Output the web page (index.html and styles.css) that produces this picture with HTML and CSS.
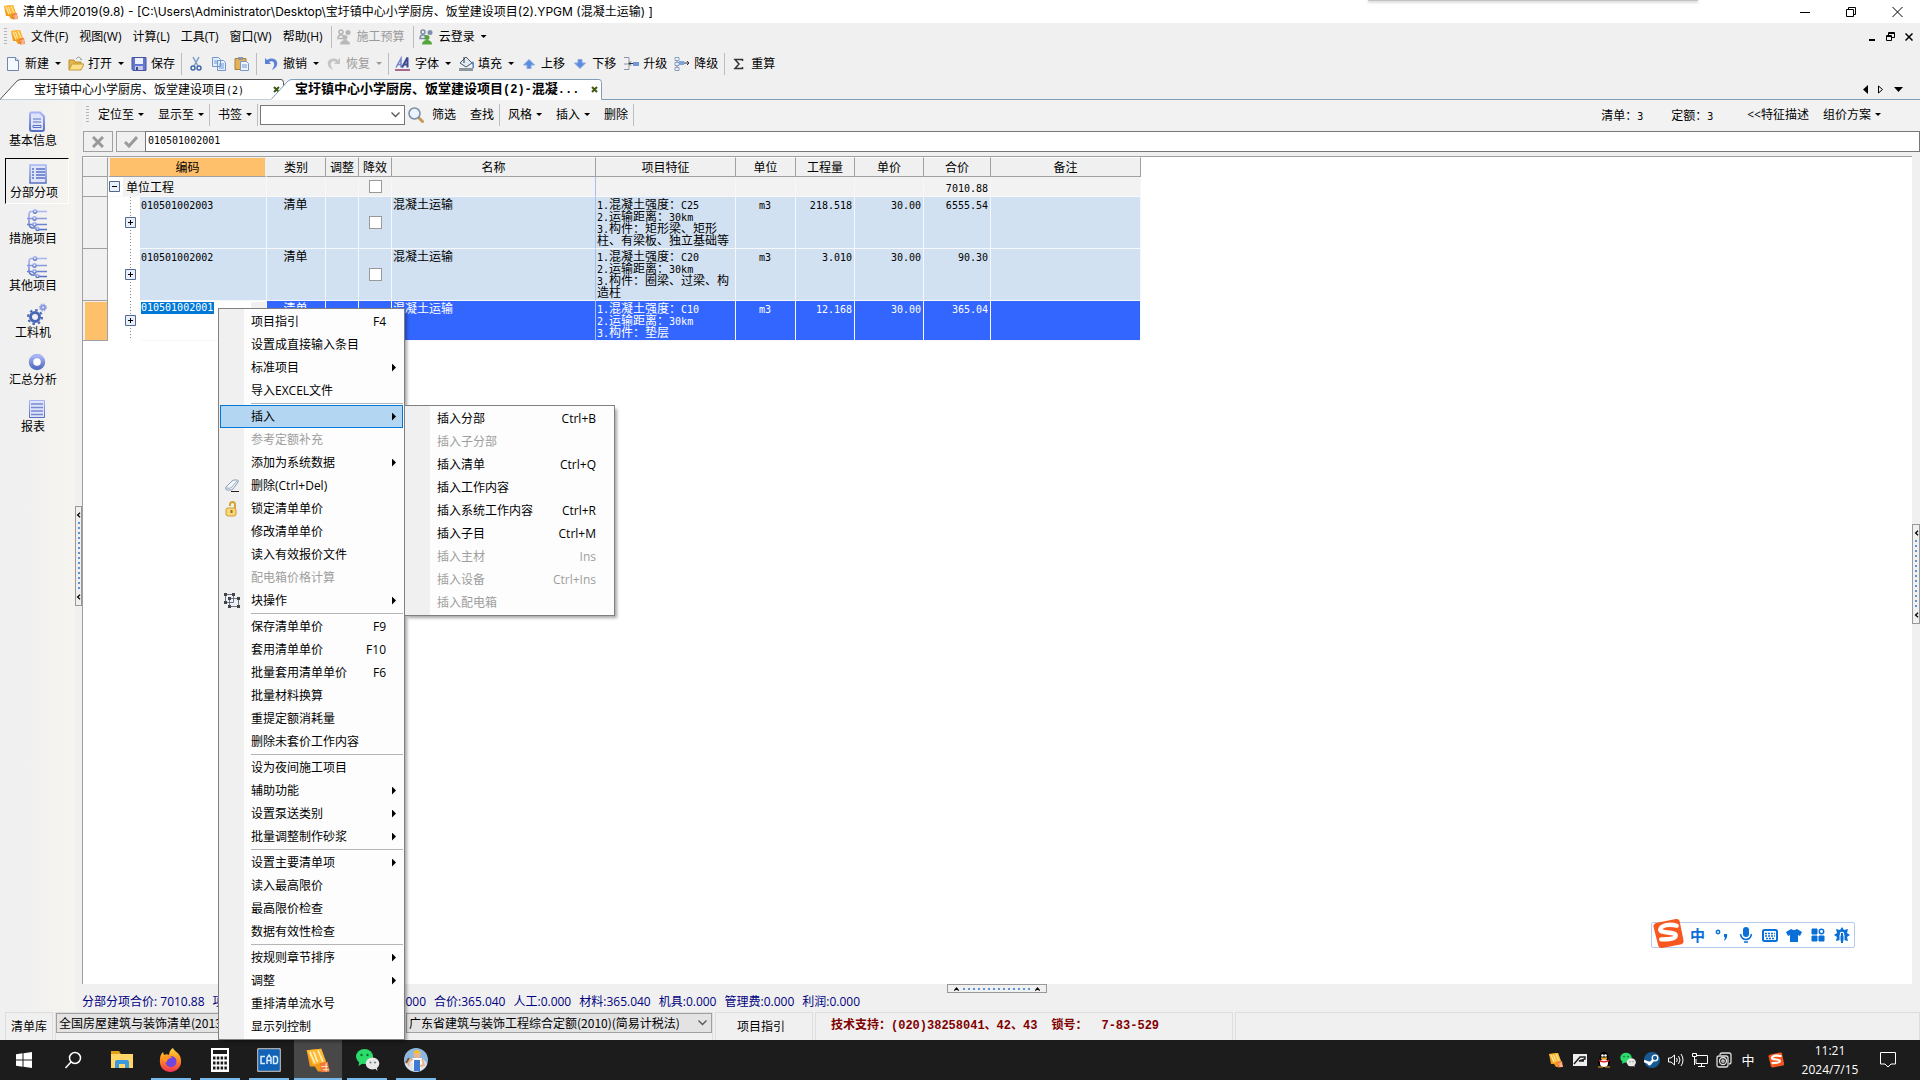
FILE: index.html
```
<!DOCTYPE html>
<html lang="zh-CN">
<head>
<meta charset="utf-8">
<title>清单大师2019(9.8)</title>
<link rel="stylesheet" href="styles.css">
</head>
<body>
<svg width="0" height="0" class="defs" aria-hidden="true">
  <defs>
    <linearGradient id="gb" x1="0" y1="0" x2="0" y2="1"><stop offset="0" stop-color="#a9b4f5"/><stop offset="1" stop-color="#5570c0"/></linearGradient>
    <linearGradient id="gf" x1="0" y1="0" x2="0" y2="1"><stop offset="0" stop-color="#ffd83a"/><stop offset=".5" stop-color="#ff8a1e"/><stop offset="1" stop-color="#f0325a"/></linearGradient>
    <symbol id="app" viewBox="0 0 16 16"><path d="M1 2 10 1l3 9 2 5-7 0-2-3-3 0z" fill="#f09a1c"/><path d="M1 2 10 1l3 8-8 2z" fill="#ffb833"/><path d="M3 3l3 7M5 3c2 1 1 5 3 6M8 2l3 7" stroke="#fff0c0" fill="none"/><path d="M9 10l5-1 1 6-5 .5z" fill="#f07a3c"/><path d="M10 12h4m-3 2h4m-2-4v5" stroke="#ffe0c0" stroke-width=".7"/></symbol>
    <symbol id="wechat" viewBox="0 0 24 24"><ellipse cx="9" cy="8.500" rx="8.500" ry="7.500" fill="#2cdc6b"/><path d="M4 13l-1 5 5-3z" fill="#2cdc6b"/><circle cx="6" cy="7" r="1.200" fill="#116b35"/><circle cx="12" cy="7" r="1.200" fill="#116b35"/><ellipse cx="17" cy="15.500" rx="6.800" ry="6" fill="#e8e8e8"/><path d="M19 20l3 3-1-5z" fill="#e8e8e8"/><circle cx="15" cy="14.500" r="1" fill="#777"/><circle cx="19.500" cy="14.500" r="1" fill="#777"/></symbol>
    <symbol id="sogou" viewBox="0 0 32 32"><path d="M5 5 24 1q3-.5 4 2l4 20q.5 3-2 4L10 31q-3 .5-4-2L1 9q-.5-3 4-4z" fill="#f8581f"/><path d="M25 8c-7-2-16-1-17 4 0 4 16 2 16 6 0 4-9 4-15 4" fill="none" stroke="#fff" stroke-width="4.500" stroke-linecap="round"/></symbol>
    <symbol id="people" viewBox="0 0 16 16"><circle cx="4" cy="3" r="2" fill="none" stroke="currentColor" stroke-width="1.500"/><path d="M1 9.500q0-3.500 3-3.500t3 3.500z" fill="none" stroke="currentColor" stroke-width="1.500"/><circle cx="11" cy="3.500" r="2.500" fill="currentColor"/><circle cx="8" cy="8.500" r="2.500"/><path d="M3 15.500c0-6 10-6 10 0z"/></symbol>
    <symbol id="tree" viewBox="0 0 20 22"><g fill="none" stroke="url(#gb)" stroke-width="1.500"><path d="M20 2.500H9M7 2.500H4Q2 2.500 2 6v9q0 3 3 4h4M0 9.500h6M9 9.500h11M0 15.500h6M9 15.500h11M12 20.500h8"/><circle cx="8" cy="2.500" r="1.700"/><circle cx="7.500" cy="9.500" r="1.700"/><circle cx="7.500" cy="15.500" r="1.700"/><circle cx="10.500" cy="20" r="1.500"/></g></symbol>
    <symbol id="arrow" viewBox="0 0 16 16"><path d="M8 3.500 13.500 9H10v3.500H6V9H2.500z" fill="#5b8ce0" stroke="#89a8dc"/></symbol>
    <symbol id="undo" viewBox="0 0 16 16"><path d="M2 2v6h6L6 6c3-2 6 0 5 4l-2 4c4-2 6-5 5-8S9 1 4 4z" fill="currentColor"/></symbol>
    <symbol id="lvl" viewBox="0 0 16 16"><path d="M3 2v12M3 8h4" stroke="#777" fill="none"/><path d="M1 1.500h4v3H1zM1 6.500h4v3H1zM1 11.500h4v3H1z" fill="#e9f1fb" stroke="#8aa0bd"/><path d="M5 5h5v4H5z" fill="#7ea6dc"/><path d="M10 7h5m-2-2 2 2-2 2" stroke="#333" fill="none"/></symbol>
    <symbol id="lvlup" viewBox="0 0 16 16"><path d="M1 1.500h5v12H1M1 8h5" stroke="#8a94a5" fill="none"/><path d="M6 7.500h6m-4-2-2 2 2 2" stroke="#333" fill="none"/><path d="M10 6h6v4h-6z" fill="#6c98da"/></symbol>
    <symbol id="chev" viewBox="0 0 8 9"><path d="M6.500 1 2.500 4.500l4 3.500" fill="none" stroke="#000" stroke-width="2"/></symbol>
  </defs>
</svg>

<header class="titlebar">
  <svg class="i16"><use href="#app"/></svg>
  <span class="title">清单大师2019(9.8) - [C:\Users\Administrator\Desktop\宝圩镇中心小学厨房、饭堂建设项目(2).YPGM (混凝土运输) ]</span>
  <div class="winbtns">
    <button aria-label="最小化"><svg width="10" height="10"><path d="M0 5.500h10" stroke="#000"/></svg></button>
    <button aria-label="还原"><svg width="10" height="10"><path d="M.5 2.500h7v7h-7zM2.500 2V.5h7v7H8" fill="none" stroke="#000"/></svg></button>
    <button aria-label="关闭"><svg width="11" height="10"><path d="M.5 0l10 10M10.500 0l-10 10" stroke="#000"/></svg></button>
  </div>
  <div class="topstrip"></div>
</header>

<nav class="menubar">
  <i class="grip"></i>
  <svg class="i16"><use href="#app"/></svg>
  <button>文件(F)</button><button>视图(W)</button><button>计算(L)</button><button>工具(T)</button><button>窗口(W)</button><button>帮助(H)</button>
  <i class="sep"></i>
  <button class="tb off"><svg class="i16 gray"><use href="#people"/></svg>施工预算</button>
  <i class="sep"></i>
  <button class="tb"><svg class="i16 green"><use href="#people"/></svg>云登录<i class="caret"></i></button>
  <div class="mdi">
    <button aria-label="最小化子窗口"><svg width="8" height="9"><path d="M1 8h6" stroke="#000" stroke-width="2"/></svg></button>
    <button aria-label="还原子窗口"><svg width="9" height="9"><path d="M.5 3.500h5v5h-5zM.5 4.500h5M2.500 3V.5h6v5H6M2.500 1.500h6" fill="none" stroke="#000"/></svg></button>
    <button aria-label="关闭子窗口"><svg width="8" height="8"><path d="M.5.5l7 7m0-7-7 7" stroke="#000" stroke-width="1.500"/></svg></button>
  </div>
</nav>

<div class="toolbar">
  <button class="tb"><svg class="i16" viewBox="0 0 16 16"><path d="M2.500 1.500h8l3 3v10h-11z" fill="#f4f8ff" stroke="#6f86ad"/><path d="M10.500 1.500v3h3" fill="#cfe0fa" stroke="#6f86ad"/></svg>新建<i class="caret"></i></button>
  <button class="tb"><svg class="i16" viewBox="0 0 16 16"><path d="M1 14V4h5l1 2h6v3" fill="#e8b64a" stroke="#b98f30"/><path d="M1 14l3-6h12l-3 6z" fill="#fbe08c" stroke="#c59a38"/><path d="M8 3c2-3 5-2 5 1l1-1" stroke="#8a94a0" fill="none"/></svg>打开<i class="caret"></i></button>
  <button class="tb"><svg class="i16" viewBox="0 0 16 16"><path d="M1 1.500h14v13H2l-1-1z" fill="#6576cf" stroke="#46539c"/><path d="M4 2h8v6H4z" fill="#eef2ff"/><path d="M4 10h8v4H4z" fill="#c8cbe8"/><path d="M5 11h2v3H5z" fill="#3c478c"/></svg>保存</button>
  <i class="sep"></i>
  <button class="tb" aria-label="剪切"><svg class="i16" viewBox="0 0 16 16"><path d="M5 1l5 9M11 1 6 10" stroke="#7d9cc9" stroke-width="1.500"/><g fill="none" stroke="#4169a8" stroke-width="1.500"><circle cx="5" cy="12" r="2"/><circle cx="11" cy="12" r="2"/></g></svg></button>
  <button class="tb" aria-label="复制"><svg class="i16" viewBox="0 0 16 16"><path d="M1.500 1.500h6l2 2v7h-8zM6.500 4.500h6l2 2v8h-8z" fill="#e4effd" stroke="#7595c7"/><path d="M3 5h3M3 7h3M8 8h5M8 10h5M8 12h5" stroke="#6f97d4"/></svg></button>
  <button class="tb" aria-label="粘贴"><svg class="i16" viewBox="0 0 16 16"><path d="M1 2.500h11v11H1z" fill="#e5b25a" stroke="#a9803a"/><path d="M4 1h5v3H4z" fill="#8c97a8"/><path d="M6.500 5.500h6l2 2v7h-8z" fill="#edf4ff" stroke="#7c97c0"/><path d="M8 9h5M8 11h5" stroke="#6f97d4"/></svg></button>
  <i class="sep"></i>
  <button class="tb"><svg class="i16 undo"><use href="#undo"/></svg>撤销<i class="caret"></i></button>
  <button class="tb off"><svg class="i16 redo"><use href="#undo"/></svg>恢复<i class="caret"></i></button>
  <i class="sep"></i>
  <button class="tb"><svg class="i16" viewBox="0 0 16 16"><path d="M1 11.500 6 2.500v9M3 8.500h3" fill="none" stroke="#7384c8" stroke-width="1.500"/><path d="M7 11.500 12.500 1.500v10M9 8.500h4" fill="none" stroke="#3c4b92" stroke-width="2"/><path d="M0 14h15" stroke="#a6688c" stroke-width="2"/></svg>字体<i class="caret"></i></button>
  <button class="tb"><svg class="i16" viewBox="0 0 16 16"><path d="M2 7l6-6 6 6-6 4z" fill="#e3ebf2" stroke="#46586b"/><path d="M6 1v6" stroke="#333"/><path d="M14 6c2 2 2 4 1 6" stroke="#5987c3" stroke-width="2" fill="none"/><path d="M1 12h14v3H1z" fill="#8f979e"/></svg>填充<i class="caret"></i></button>
  <button class="tb"><svg class="i16"><use href="#arrow"/></svg>上移</button>
  <button class="tb"><svg class="i16 flip"><use href="#arrow"/></svg>下移</button>
  <button class="tb"><svg class="i16"><use href="#lvlup"/></svg>升级</button>
  <button class="tb"><svg class="i16"><use href="#lvl"/></svg>降级</button>
  <i class="sep"></i>
  <button class="tb"><svg class="i16" viewBox="0 0 16 16"><path d="M11.500 5V3.500H4L8 8l-4 4.500h7.500V11" fill="none" stroke="#333" stroke-width="1.500"/></svg>重算</button>
</div>

<div class="tabs">
  <button class="tab one"><svg class="shape" viewBox="0 0 284 21" preserveAspectRatio="none"><path d="M0 20.500 17 2q2-1.500 4-1.500h260q2.500 0 2.500 3v17" fill="#fff" stroke="#555"/></svg><span class="sim">宝圩镇中心小学厨房、饭堂建设项目<b class="n">(2)</b></span><svg class="x" viewBox="0 0 7 7"><path d="M1 1l5 5M6 1 1 6" stroke="#3d5a10" stroke-width="2"/></svg></button>
  <button class="tab two"><svg class="shape" viewBox="0 0 331 21" preserveAspectRatio="none"><path d="M0 20.500 17 2q2-1.500 4-1.500h307q2.500 0 2.500 3v17V21H0z" fill="#fff"/><path d="M0 20.500 17 2q2-1.500 4-1.500h307q2.500 0 2.500 3v17" fill="none" stroke="#7f9db9"/></svg><span class="simb">宝圩镇中心小学厨房、饭堂建设项目<b class="nb">(2)-</b>混凝<b class="nb">...</b></span><svg class="x" viewBox="0 0 7 7"><path d="M1 1l5 5M6 1 1 6" stroke="#3d5a10" stroke-width="2"/></svg></button>
  <div class="tabnav">
    <button aria-label="上一页"><svg width="6" height="9"><path d="M6 0v9L1 4.500z"/></svg></button>
    <button aria-label="下一页"><svg width="6" height="9"><path d="M.5 1v7L4.500 4.500z" fill="none" stroke="#000"/></svg></button>
    <button aria-label="列表"><svg width="9" height="5"><path d="M0 0h9L4.500 5z"/></svg></button>
  </div>
</div>

<div class="work">
  <aside class="side sim">
    <button><svg viewBox="0 0 20 22"><path d="M4 1.500h9l4 4V18q0 2-2 2H5q-2 0-2-2V3q0-1.500 1-1.500z" fill="#dfe4fb" stroke="url(#gb)" stroke-width="2"/><path d="M6 8h8M6 11h8M6 14.500h8v2H6z" stroke="#5870c8" fill="none"/></svg>基本信息</button>
    <button class="sel"><svg viewBox="0 0 20 22"><path d="M2 2h16v18H2z" fill="#dfe4fb" stroke="url(#gb)" stroke-width="1.500"/><path d="M4 6h2m2 0h9M4 9h2m2 0h9M4 12h2m2 0h9M4 15h2m2 0h9" stroke="#5870c8" stroke-width="1.500"/></svg>分部分项</button>
    <button><svg><use href="#tree"/></svg>措施项目</button>
    <button><svg><use href="#tree"/></svg>其他项目</button>
    <button><svg viewBox="0 0 20 22"><circle cx="8" cy="14" r="4.500" fill="none" stroke="#4a68b8" stroke-width="3"/><circle cx="8" cy="14" r="7" fill="none" stroke="#4a68b8" stroke-width="2" stroke-dasharray="2.500 3"/><circle cx="16" cy="4.500" r="2" fill="none" stroke="#8a98e0" stroke-width="2"/><circle cx="16" cy="4.500" r="3.500" fill="none" stroke="#8a98e0" stroke-dasharray="1.500 1.200"/></svg>工料机</button>
    <button><svg viewBox="0 0 20 22"><circle cx="10" cy="12" r="6" fill="#fff" stroke="url(#gb)" stroke-width="4.500"/></svg>汇总分析</button>
    <button><svg viewBox="0 0 20 22"><path d="M2.500 3.500h15v17h-15z" fill="#dfe4fb" stroke="url(#gb)"/><path d="M4 7h12M4 10.500h12M4 14h12M4 17.500h12" stroke="#7a88cf" stroke-width="1.500"/></svg>报表</button>
  </aside>
  <div class="vsplit"><button class="handle v" aria-label="收起侧栏"><svg><use href="#chev"/></svg><i></i><svg><use href="#chev"/></svg></button></div>
  <main class="content">
    <div class="toolbar2">
      <i class="grip"></i>
      <button class="t2">定位至<i class="caret"></i></button>
      <button class="t2">显示至<i class="caret"></i></button>
      <i class="sep"></i>
      <button class="t2">书签<i class="caret"></i></button>
      <i class="sep"></i>
      <select class="find" aria-label="查找内容"><option></option></select>
      <svg class="i16" viewBox="0 0 16 16"><path d="M11 11l3.500 3.500" stroke="#c89a52" stroke-width="3" stroke-linecap="round"/><circle cx="6.500" cy="6.500" r="5.500" fill="#eaf4ff" stroke="#7a8ea5" stroke-width="1.500"/></svg>
      <button class="t2">筛选</button>
      <button class="t2">查找</button>
      <i class="sep"></i>
      <button class="t2">风格<i class="caret"></i></button>
      <button class="t2">插入<i class="caret"></i></button>
      <button class="t2">删除</button>
      <i class="sep"></i>
      <div class="counts sim"><span>清单：<b class="n">3</b></span><span>定额：<b class="n">3</b></span></div>
      <button class="t2">&lt;&lt;特征描述</button>
      <button class="t2">组价方案<i class="caret"></i></button>
    </div>
    <div class="formula">
      <button aria-label="取消"><svg width="12" height="12"><path d="M1 1l10 10M11 1 1 11" stroke="#999" stroke-width="3"/></svg></button>
      <button aria-label="确定"><svg width="14" height="12"><path d="M1 6l4 4 8-9" fill="none" stroke="#999" stroke-width="3"/></svg></button>
      <input type="text" class="n" aria-label="单元格内容" value="010501002001">
    </div>
    <div class="gridrow">
      <div class="grid sim">
        <table>
          <colgroup><col class="c25"><col class="c32"><col class="c127"><col class="c59"><col class="c33"><col class="c33"><col class="c204"><col class="c140"><col class="c60"><col class="c59"><col class="c69"><col class="c67"><col class="c150"></colgroup>
          <thead><tr><th></th><th colspan="2" class="hot">编码</th><th>类别</th><th>调整</th><th>降效</th><th>名称</th><th>项目特征</th><th>单位</th><th>工程量</th><th>单价</th><th>合价</th><th>备注</th></tr></thead>
          <tbody>
            <tr class="root"><td class="ind"></td><td colspan="2" class="rootcell"><div><svg class="box" viewBox="0 0 11 11"><path d="M.5.500h10v10H.5z" fill="#e8eefa" stroke="#51688f"/><path d="M3 5.500h5" stroke="#000"/></svg><span>单位工程</span></div></td><td></td><td></td><td class="ck"><input type="checkbox" aria-label="降效"></td><td class="bl"></td><td></td><td></td><td></td><td></td><td class="r"><b class="n">7010.88</b></td><td></td></tr>
            <tr class="tall"><td class="ind"></td><td class="tree"><svg class="box" viewBox="0 0 11 11"><path d="M.5.500h10v10H.5z" fill="#e8eefa" stroke="#51688f"/><path d="M3 5.500h5M5.500 3v5" stroke="#000"/></svg></td><td><b class="n">010501002003</b></td><td class="c">清单</td><td></td><td class="ck"><input type="checkbox" aria-label="降效"></td><td class="bl">混凝土运输</td><td><b class="n">1.</b>混凝土强度：<b class="n">C25</b><br><b class="n">2.</b>运输距离：<b class="n">30km</b><br><b class="n">3.</b>构件：矩形梁、矩形<br>柱、有梁板、独立基础等</td><td class="c"><b class="n">m3</b></td><td class="r"><b class="n">218.518</b></td><td class="r"><b class="n">30.00</b></td><td class="r"><b class="n">6555.54</b></td><td></td></tr>
            <tr class="tall"><td class="ind"></td><td class="tree"><svg class="box" viewBox="0 0 11 11"><path d="M.5.500h10v10H.5z" fill="#e8eefa" stroke="#51688f"/><path d="M3 5.500h5M5.500 3v5" stroke="#000"/></svg></td><td><b class="n">010501002002</b></td><td class="c">清单</td><td></td><td class="ck"><input type="checkbox" aria-label="降效"></td><td class="bl">混凝土运输</td><td><b class="n">1.</b>混凝土强度：<b class="n">C20</b><br><b class="n">2.</b>运输距离：<b class="n">30km</b><br><b class="n">3.</b>构件：圈梁、过梁、构<br>造柱</td><td class="c"><b class="n">m3</b></td><td class="r"><b class="n">3.010</b></td><td class="r"><b class="n">30.00</b></td><td class="r"><b class="n">90.30</b></td><td></td></tr>
            <tr class="cur"><td class="ind"></td><td class="tree"><svg class="box" viewBox="0 0 11 11"><path d="M.5.500h10v10H.5z" fill="#e8eefa" stroke="#51688f"/><path d="M3 5.500h5M5.500 3v5" stroke="#000"/></svg></td><td class="edit"><div><input type="text" class="n" aria-label="编码" value="010501002001"><button aria-label="选择"></button></div></td><td class="c">清单</td><td></td><td></td><td class="bl">混凝土运输</td><td><b class="n">1.</b>混凝土强度：<b class="n">C10</b><br><b class="n">2.</b>运输距离：<b class="n">30km</b><br><b class="n">3.</b>构件：垫层</td><td class="c"><b class="n">m3</b></td><td class="r"><b class="n">12.168</b></td><td class="r"><b class="n">30.00</b></td><td class="r"><b class="n">365.04</b></td><td></td></tr>
          </tbody>
        </table>
      </div>
      <div class="vsplit r"><button class="handle v" aria-label="展开右栏"><svg><use href="#chev"/></svg><i></i><svg><use href="#chev"/></svg></button></div>
    </div>
    <div class="hsplit"><button class="handle h" aria-label="展开下栏"><svg><use href="#chev"/></svg><i></i><svg><use href="#chev"/></svg></button></div>
    <div class="summary">
      <div class="sumleft"><span>分部分项合价: 7010.88</span><span>项</span><span class="end">0.000</span></div>
      <span>合价:365.040</span><span>人工:0.000</span><span>材料:365.040</span><span>机具:0.000</span><span>管理费:0.000</span><span>利润:0.000</span>
    </div>
  </main>
</div>

<footer class="status sim">
  <div class="p p1"><label for="lib">清单库</label></div>
  <div class="p p2w"><select id="lib"><option>全国房屋建筑与装饰清单(2013)</option></select><select id="quota" aria-label="定额库"><option>广东省建筑与装饰工程综合定额(2010)(简易计税法)</option></select></div>
  <div class="p p3"><button>项目指引</button></div>
  <div class="p p4"><span class="simb">技术支持：(020)38258041、42、43</span><span class="simb">锁号：</span><span class="simb">7-83-529</span></div>
  <div class="p p5"></div>
</footer>

<div class="taskbar">
  <button aria-label="开始"><svg width="16" height="16" fill="#fff"><path d="M0 2.300 6.500 1.300v6.200H0zM7.500 1.200 16 0v7.500H7.500zM0 8.500h6.500v6.200L0 13.700zM7.500 8.500H16V16l-8.500-1.200z"/></svg></button>
  <button aria-label="搜索"><svg width="18" height="18"><circle cx="11" cy="7" r="5.500" fill="none" stroke="#fff" stroke-width="1.500"/><path d="M7 11l-5.500 6" stroke="#fff" stroke-width="1.500"/></svg></button>
  <button aria-label="文件资源管理器"><svg width="22" height="20"><path d="M0 1h8l2 3H0z" fill="#e2a017"/><path d="M0 4h22v14H0z" fill="#ffd667"/><path d="M4 18v-6q0-2 2-2h10q2 0 2 2v6h-4v-4H8v4z" fill="#3b9ade"/></svg></button>
  <button class="run" aria-label="Firefox"><svg width="24" height="24" viewBox="0 0 24 24"><path d="M14 0c1 3 5 4 7 8 3 7 0 15-9 16C4 24 0 18 1 11c0-3 1-5 3-7l1 3c2-1 3-1 5 0 0-3 2-6 4-7z" fill="url(#gf)"/><circle cx="12" cy="13.500" r="5.500" fill="#7046e0"/><path d="M4 9c3-2 7-2 9 1-3 0-5 1-5 4-3 0-5-2-4-5z" fill="#ff9420"/></svg></button>
  <button class="run" aria-label="计算器"><svg width="18" height="24"><path d="M0 0h18v24H0z" fill="#fff"/><path d="M2 2h14v4H2z" fill="#1c1c1c"/><path d="M2 10h14M2 15h14M2 20h14" stroke="#1c1c1c" stroke-width="3" stroke-dasharray="2.500 1.300"/></svg></button>
  <button class="run" aria-label="CAD"><svg width="24" height="24"><rect x=".5" y=".5" width="23" height="23" rx="2" fill="#1263b8" stroke="#aaa" stroke-width="1.500"/><path d="M8 8.500H4v7h4M10 16V10l2-3 2 3v6M10 12.500h4M16.500 8.500v7h3l1-1.500V10l-1-1.500z" fill="none" stroke="#d8ecff" stroke-width="1.500"/></svg></button>
  <button class="run act" aria-label="清单大师"><svg width="26" height="26"><use href="#app"/></svg></button>
  <button class="run" aria-label="微信"><svg width="25" height="24"><use href="#wechat"/></svg></button>
  <button class="run" aria-label="助手"><svg width="24" height="24" viewBox="0 0 24 24"><circle cx="12" cy="12" r="12" fill="#8fb8e0"/><path d="M1 16c2-4 5-5 7-5h8c3 0 5 1 7 5-3 10-19 10-22 0z" fill="#dfe3ea"/><circle cx="13" cy="6.500" r="3.500" fill="#f0b48c"/><path d="M9 5q4-6 8 0z" fill="#f6c21c"/><path d="M8 10h10v4l-2 9H10z" fill="#fff"/><path d="M10 12h6v11h-6z" fill="#3f7ad0"/><path d="M9 11l-5 3 1 4M18 11l2 6-4 1" stroke="#f0b48c" stroke-width="2" fill="none"/><path d="M2 15l3-5" stroke="#7a5a3a" stroke-width="2"/></svg></button>
  <div class="tray">
    <svg><use href="#app"/></svg>
    <svg viewBox="0 0 16 16"><path d="M1 2h14v12H1z" fill="#eee"/><path d="M2 12 8 5h5v2L7 9h5" stroke="#222" stroke-width="1.500" fill="none"/></svg>
    <svg viewBox="0 0 16 16"><ellipse cx="8" cy="5" rx="4.500" ry="5" fill="#000"/><ellipse cx="8" cy="10.500" rx="6" ry="5" fill="#000"/><ellipse cx="8" cy="11" rx="4" ry="4" fill="#fff"/><circle cx="6.500" cy="3.500" r="1.300" fill="#fff"/><circle cx="9.500" cy="3.500" r="1.300" fill="#fff"/><path d="M3 7.500q5 3 10 0v2q-5 2-10 0z" fill="#e02020"/><path d="M5 6h6L8 7.500zM2 15h5M9 15h5" fill="#f7a81b" stroke="#f7a81b"/></svg>
    <svg><use href="#wechat"/></svg>
    <svg viewBox="0 0 16 16"><circle cx="8" cy="8" r="8" fill="#175a96"/><circle cx="11" cy="6" r="2.800" fill="none" stroke="#fff" stroke-width="1.300"/><path d="M0 9l6 2.500 3-3" stroke="#fff" stroke-width="2.500" fill="none"/><circle cx="5.500" cy="11.500" r="2" fill="#fff"/></svg>
    <svg viewBox="0 0 16 16" fill="none" stroke="#fff"><path d="M.5 6v4H3l3.500 3V3L3 6zM8.500 6q1.500 2 0 4M10.500 4q3 4 0 8M13 2q4 6 0 12"/></svg>
    <svg viewBox="0 0 16 16" fill="none" stroke="#fff"><path d="M5 3.500h10.500v8H4V7M9.500 12v3M6 14.500h7M.5 1.500h4v3h-4zM2.500 5v8"/></svg>
    <svg viewBox="0 0 16 16" fill="none" stroke="#ddd" stroke-width="1.300"><path d="M4 3q0-2 2-2h7q2 0 2 2v7q0 2-2 2M3 4h7q2 0 2 2v7q0 2-2 2H3q-2 0-2-2V6q0-2 2-2z"/><circle cx="7" cy="9" r="3.500"/><circle cx="7" cy="9" r="1.200"/></svg>
    <span>中</span>
    <svg class="sg"><use href="#sogou"/></svg>
  </div>
  <div class="clock"><span>11:21</span><span>2024/7/15</span></div>
  <button class="note" aria-label="通知"><svg width="16" height="16"><path d="M.5.500h15v11.500H11l-3 3-3-3H.5z" fill="none" stroke="#fff"/></svg></button>
</div>

<div class="ime">
  <svg class="logo"><use href="#sogou"/></svg>
  <span>中</span>
  <svg viewBox="0 0 16 16"><circle cx="4" cy="5" r="1.700" fill="none" stroke="#0a6fd8" stroke-width="1.500"/><path d="M10 7h3q1 4-3 7l1-4h-1z" fill="#0a6fd8"/></svg>
  <svg viewBox="0 0 16 16"><rect x="5" y="0" width="6" height="10" rx="3" fill="#0a6fd8"/><path d="M2.500 7q1 5.500 5.500 5.500T13.500 7M6 15h4" stroke="#0a6fd8" stroke-width="1.500" fill="none"/></svg>
  <svg viewBox="0 0 16 16"><rect x="1" y="3" width="14" height="11" rx="1.500" fill="none" stroke="#0a6fd8" stroke-width="2"/><path d="M3 6.500h10M3 9h10M4 11.500h8" stroke="#0a6fd8" stroke-width="1.500" stroke-dasharray="2 1"/></svg>
  <svg viewBox="0 0 16 16"><path d="M5 2q3 2 6 0l5 3-2 4-2-1v7H4V8L2 9 0 5z" fill="#0a6fd8"/></svg>
  <svg viewBox="0 0 16 16"><path d="M2 2h5v5H2zM2 9h5v5H2zM9 9h5v5H9z" fill="#0a6fd8" stroke="#0a6fd8" stroke-linejoin="round"/><circle cx="11.500" cy="4.500" r="2.200" fill="none" stroke="#0a6fd8" stroke-width="1.500"/></svg>
  <svg viewBox="0 0 16 16"><path d="M8 0l2 3 4-1-1 4 3 2-3 2 1 4-4-1-2 3-2-3-4 1 1-4-3-2 3-2-1-4 4 1z" fill="#0a6fd8"/><circle cx="8" cy="7" r="2.300" fill="#fff"/><path d="M6 8v6M10 8v6" stroke="#fff"/><path d="M8 6v10" stroke="#0a6fd8" stroke-width="2"/></svg>
</div>

<div class="menu main" role="menu">
  <button>项目指引<kbd>F4</kbd></button>
  <button>设置成直接输入条目</button>
  <button class="sub">标准项目</button>
  <button>导入EXCEL文件</button>
  <hr>
  <button class="sub on">插入</button>
  <button disabled>参考定额补充</button>
  <button class="sub">添加为系统数据</button>
  <button><svg viewBox="0 0 16 16"><path d="M2 9 8 3q1-1 2-1h3q2 0 1 2l-5 7q-1 1-2 1H3q-2 0-1-3z" fill="#f2f6fb" stroke="#8b9cb5"/><path d="M2 10q5 1 6-1l5-6" fill="none" stroke="#9fb0c8"/><path d="M7 13.500h8" stroke="#222"/></svg>删除(Ctrl+Del)</button>
  <button><svg viewBox="0 0 16 16"><path d="M6 5V3.500Q6 1 8.500 1T11 3.500V7" fill="none" stroke="#d5a531" stroke-width="2"/><rect x="2" y="7" width="10" height="8" rx="2" fill="#f8d878" stroke="#cf9d30"/><path d="M7.500 9v3" stroke="#9a7220" stroke-width="2"/></svg>锁定清单单价</button>
  <button>修改清单单价</button>
  <button>读入有效报价文件</button>
  <button disabled>配电箱价格计算</button>
  <button class="sub"><svg viewBox="0 0 16 16"><path d="M1.500 1.500h8v8h-8zM5.500 5.500h9v8h-9z" fill="none" stroke="#66748c"/><path d="M0 0h3v3H0zM8 0h3v3H8zM0 8h3v3H0zM4 4h3v3H4zM13 4h3v3h-3zM4 12h3v3H4zM13 12h3v3h-3z" fill="#444"/></svg>块操作</button>
  <hr>
  <button>保存清单单价<kbd>F9</kbd></button>
  <button>套用清单单价<kbd>F10</kbd></button>
  <button>批量套用清单单价<kbd>F6</kbd></button>
  <button>批量材料换算</button>
  <button>重提定额消耗量</button>
  <button>删除未套价工作内容</button>
  <hr>
  <button>设为夜间施工项目</button>
  <button class="sub">辅助功能</button>
  <button class="sub">设置泵送类别</button>
  <button class="sub">批量调整制作砂浆</button>
  <hr>
  <button class="sub">设置主要清单项</button>
  <button>读入最高限价</button>
  <button>最高限价检查</button>
  <button>数据有效性检查</button>
  <hr>
  <button class="sub">按规则章节排序</button>
  <button class="sub">调整</button>
  <button>重排清单流水号</button>
  <button>显示列控制</button>
</div>
<div class="menu second" role="menu">
  <button>插入分部<kbd>Ctrl+B</kbd></button>
  <button disabled>插入子分部</button>
  <button>插入清单<kbd>Ctrl+Q</kbd></button>
  <button>插入工作内容</button>
  <button>插入系统工作内容<kbd>Ctrl+R</kbd></button>
  <button>插入子目<kbd>Ctrl+M</kbd></button>
  <button disabled>插入主材<kbd>Ins</kbd></button>
  <button disabled>插入设备<kbd>Ctrl+Ins</kbd></button>
  <button disabled>插入配电箱</button>
</div>
</body>
</html>
```

FILE: styles.css
```
* { box-sizing: border-box; }
html, body { height: 100%; }
body {
  margin: 0; display: flex; flex-direction: column; position: relative; overflow: hidden;
  background: #f0f0f0; color: #000; font: 12px/16px "Open Sans", "Noto Sans CJK SC", sans-serif;
  white-space: nowrap;
}
button { font: inherit; color: inherit; background: none; border: 0; padding: 0; margin: 0; white-space: nowrap; }
input, select { font: inherit; color: inherit; margin: 0; border-radius: 0; }
svg { display: block; flex: none; }
.defs { position: absolute; }
.sim { font-family: "Noto Sans CJK SC", sans-serif; }
.simb { font: bold 13px/16px "Liberation Mono", "Noto Sans CJK SC", monospace; }
.nb { font-size: 12px; }
.n { font: 10px/12px "DejaVu Sans Mono", monospace; }
.i16 { width: 16px; height: 16px; }

.titlebar { position: relative; display: flex; align-items: center; height: 23px; padding-left: 3px; gap: 4px; background: #fff; flex: none; }
.title { font-family: Inter, "Noto Sans CJK SC", sans-serif; }
.winbtns { margin-left: auto; display: flex; align-items: center; align-self: stretch; }
.winbtns button { width: 46px; height: 20px; display: grid; place-items: center; }
.topstrip { position: absolute; top: 0; right: 222px; width: 330px; height: 1px; background: #c4c4c4; box-shadow: 0 1px 3px #999; }

.menubar { display: flex; align-items: center; height: 27px; padding-left: 4px; gap: 11px; flex: none; }
.menubar .grip { margin-right: -8px; }
.menubar .i16 { margin-right: -6px; }
.menubar .sep { margin: 0 -6px 0 -3px; }
.menubar .tb { gap: 4px; }
.menubar .tb .i16 { margin: 0; }
.grip { width: 3px; height: 18px; background: repeating-linear-gradient(#b4b4b4 0 1px, transparent 1px 3px); flex: none; }
.sep { width: 1px; height: 22px; background: #bdbdbd; flex: none; }
.caret { width: 6px; height: 3px; background: #000; clip-path: polygon(0 0, 100% 0, 50% 100%); margin-left: 2px; flex: none; }
.off { color: #9a9a9a; }
.off .caret { background: #9a9a9a; }
.gray { color: #b4b4b4; fill: #b9b9b9; }
.green { color: #7d8fa8; fill: #55a53c; }
.mdi { margin-left: auto; display: flex; align-items: center; gap: 10px; padding-right: 7px; }
.tb { display: flex; align-items: center; gap: 4px; flex: none; }
.undo { color: #5a83d6; }
.redo { color: #c4c4c4; transform: scaleX(-1); }
.flip { transform: scaleY(-1); }

.toolbar { display: flex; align-items: center; height: 27px; padding-left: 5px; gap: 7px; flex: none; }
.toolbar .sep { margin: 0 -1px; }

.tabs { display: flex; align-items: flex-end; height: 23px; padding-top: 2px; border-bottom: 1px solid #7f9db9; flex: none; }
.tab { position: relative; display: flex; align-items: center; height: 21px; margin-bottom: -1px; padding: 0 4px 0 34px; justify-content: space-between; }
.tab > * { position: relative; }
.tab .shape { position: absolute; inset: 0; width: 100%; height: 21px; }
.tab.one { width: 284px; height: 20px; margin-bottom: 0; }
.tab.two { width: 331px; margin-left: -13px; padding-left: 24px; }
.x { width: 7px; height: 7px; }
.tabnav { margin-left: auto; align-self: center; display: flex; align-items: center; gap: 10px; padding-right: 17px; }

.work { flex: 1; min-height: 0; display: flex; }
.side { width: 75px; flex: none; background: linear-gradient(90deg, #f0f0f0 30%, #f6f4ef); padding: 11px 5px 0; }
.side button { display: flex; flex-direction: column; align-items: center; width: 64px; height: 46px; padding-right: 8px; line-height: 14px; margin-bottom: 1px; }
.side svg { width: 20px; height: 22px; margin-left: 8px; }
.side .sel { border: 1px solid #fff; border-top-color: #000; border-left-color: #000; padding: 4px 6px 0 0; margin-bottom: 5px; }
.vsplit { width: 7px; flex: none; display: flex; align-items: center; background: #f0f0f0; }
.vsplit.r { width: 8px; padding-top: 8px; }
.handle { display: flex; align-items: center; justify-content: space-between; border: 1px solid #999; }
.handle svg { width: 5px; height: 8px; }
.handle.v { flex-direction: column; width: 100%; height: 100px; padding: 4px 0; }
.handle.v i { width: 2px; height: 68px; background: repeating-linear-gradient(#5b93d5 0 2px, transparent 2px 5px); }
.hsplit { height: 10px; flex: none; display: flex; justify-content: center; align-items: flex-start; padding-right: 8px; }
.handle.h { width: 100px; height: 9px; padding: 0 6px; }
.handle.h svg { transform: rotate(90deg); }
.handle.h i { height: 2px; width: 68px; background: repeating-linear-gradient(90deg, #5b93d5 0 2px, transparent 2px 5px); }

.content { flex: 1; min-width: 0; display: flex; flex-direction: column; }
.toolbar2 { display: flex; align-items: center; height: 31px; padding: 0 37px 2px 4px; gap: 8px; background: #f2f2f2; flex: none; }
.toolbar2 .grip { margin-right: 1px; }
.toolbar2 .sep { margin-left: -5px; }
.t2 { display: flex; align-items: center; gap: 2px; padding-right: 2px; }
.t2 + .t2 { margin-left: 4px; }
.find { width: 145px; height: 20px; border: 1px solid #777; background: #fff; appearance: none; margin: 0 -5px 0 -6px; }
.find, .status select { background-repeat: no-repeat; background-position: right 4px center; background-image: url("data:image/svg+xml,%3Csvg xmlns='http://www.w3.org/2000/svg' width='9' height='6'%3E%3Cpath d='M.5.5l4 4 4-4' fill='none' stroke='%23555' stroke-width='1.3'/%3E%3C/svg%3E"); }
.counts { margin-left: auto; display: flex; gap: 28px; padding-right: 26px; }
.formula { display: flex; height: 21px; gap: 3px; padding-left: 1px; flex: none; }
.formula button { width: 30px; display: grid; place-items: center; border: 1px solid #a0a0a0; }
.formula input { flex: 1; border: 1px solid #777; background: #fff; padding: 0 0 2px 2px; margin-left: -4px; outline: 0; min-width: 0; }
.gridrow { flex: 1; min-height: 0; display: flex; margin-top: 4px; }
.grid { flex: 1; min-width: 0; background: #fff; border: solid #a0a0a0; border-width: 1px 0 0 1px; }

table { border-collapse: separate; border-spacing: 0; table-layout: fixed; width: 1058px; line-height: 12px; }
.c25 { width: 25px; } .c32 { width: 32px; } .c127 { width: 127px; } .c59 { width: 59px; } .c33 { width: 33px; }
.c204 { width: 204px; } .c140 { width: 140px; } .c60 { width: 60px; } .c69 { width: 69px; } .c67 { width: 67px; } .c150 { width: 150px; }
th { height: 20px; padding: 0; font-weight: normal; background: #f0f0f0; border-right: 1px solid #a0a0a0; border-bottom: 1px solid #a0a0a0; border-top: 1px solid #fff; }
th.hot { background: #ffc06c; border: solid #f0f0f0; border-width: 1px 2px 1px 2px; border-bottom-color: #a0a0a0; }
td { padding: 1px 2px 0 1px; vertical-align: top; background: #d2e1f2; border-right: 1px solid #f6f8fc; border-bottom: 1px solid #f6f8fc; }
td b.n { line-height: 1px; }
td.bl { border-right-color: #9fc3ea; }
td.ind, .cur td.ind { background: #f0f0f0; border-color: #a0a0a0; }
.root td { background: #f2f2f2; height: 20px; vertical-align: middle; }
.tall td { height: 52px; }
.cur td { height: 40px; background: #3366ff; color: #fff; }
.cur td.ind { background: #ffc06c; background-clip: padding-box; box-shadow: inset 2px 1px #f0f0f0; }
.root td.rootcell { padding: 0; background: linear-gradient(90deg, #fff 15px, #f2f2f2 15px); }
.rootcell div { display: flex; align-items: center; gap: 6px; padding-left: 1px; }
.box { width: 11px; height: 11px; }
td.tree, .cur td.tree { padding: 0 0 0 17px; vertical-align: middle; border-right: 0; border-bottom-color: #fff; background: repeating-linear-gradient(#888 0 1px, #fff 1px 3px) 22px 0 / 1px 100% no-repeat, #fff; }
.c { text-align: center; }
.r { text-align: right; }
td.ck { text-align: center; vertical-align: middle; padding: 0; }
.ck input { appearance: none; display: block; width: 13px; height: 13px; margin: 0 auto; border: 1px solid #999; background: #fff; }
.cur td.edit { background: #fff; padding-right: 0; }
.edit div { display: flex; justify-content: space-between; }
.edit input { width: 73px; height: 12px; padding: 0; border: 0; background: #0078d7; color: #fff; outline: 0; }
.edit button { width: 15px; height: 12px; background: #f0f0f0; }

.summary { display: flex; gap: 8px; height: 18px; line-height: 16px; color: #000080; flex: none; overflow: hidden; }
.sumleft { display: flex; gap: 8px; width: 344px; flex: none; }
.end { margin-left: auto; }

.status { display: flex; height: 28px; gap: 2px; padding-left: 5px; flex: none; }
.p { display: flex; align-items: center; justify-content: center; border: 1px solid #ddd; border-bottom: 0; padding-bottom: 2px; }
.p1 { width: 48px; }
.p2w { width: 658px; justify-content: space-between; align-items: flex-start; gap: 20px; }
.status select { height: 20px; border: 1px solid #a0a0a0; background-color: #e3e3e3; appearance: none; padding: 0 0 0 2px; }
#lib { width: 328px; }
#quota { width: 306px; }
.p3 { width: 98px; padding-right: 6px; }
.p4 { width: 418px; justify-content: flex-start; padding-left: 15px; gap: 14px; color: #800000; }
.p4 .simb { font-size: 12px; }
.p5 { flex: 1; }

.taskbar { display: flex; height: 40px; gap: 1px; background: #1c1c1c; color: #fff; flex: none; }
.taskbar button { width: 48px; display: grid; place-items: center; position: relative; }
.run::after { content: ""; position: absolute; left: 4px; right: 4px; bottom: 0; height: 2px; background: #76b9ed; }
.act { background: #484848; }
.act::after { left: 0; right: 0; }
.tray { margin-left: auto; display: flex; align-items: center; gap: 8px; padding-right: 8px; }
.tray svg { width: 16px; height: 16px; }
.tray span { width: 16px; font-size: 13px; text-align: center; }
.tray .sg { margin-left: 4px; }
.clock { width: 74px; display: flex; flex-direction: column; justify-content: center; text-align: center; line-height: 19px; }
.taskbar .note { width: 40px; margin-right: 12px; }

.ime { position: absolute; right: 65px; bottom: 132px; display: flex; align-items: center; gap: 8px; height: 26px; padding: 0 4px 0 38px; background: #fff; border: 1px solid #b4cdee; border-radius: 2px; color: #0a6fd8; font-weight: bold; }
.ime svg { width: 16px; height: 16px; }
.ime .logo { position: absolute; left: 0; top: -5px; width: 32px; height: 31px; }
.ime span { width: 16px; font-size: 15px; }

.menu { position: absolute; padding: 1px; border: 1px solid #808080; box-shadow: 3px 3px 3px -1px rgba(0,0,0,.35); background: linear-gradient(90deg, #f0f0f0 25px, #fdfdfd 25px); }
.main { left: 218px; top: 308px; width: 187px; }
.second { left: 404px; top: 405px; width: 211px; }
.menu button { position: relative; display: flex; align-items: center; width: 100%; height: 23px; padding: 0 17px 0 31px; }
.menu button:disabled { color: #9d9d9d; }
.menu .on { background: #b3d7f3; outline: 1px solid #0078d7; outline-offset: -1px; }
.menu svg { position: absolute; left: 4px; width: 16px; height: 16px; }
.menu kbd { font: inherit; margin-left: auto; }
.menu hr { height: 1px; margin: 1px 0 1px 31px; border: 0; background: #b5b5b5; }
.sub::after { content: ""; position: absolute; right: 7px; width: 4px; height: 8px; background: #000; clip-path: polygon(0 0, 100% 50%, 0 100%); }
```
